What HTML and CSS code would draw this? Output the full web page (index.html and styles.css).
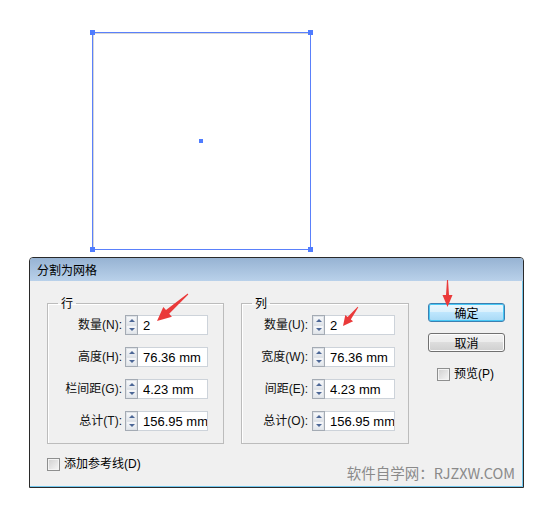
FILE: index.html
```html
<!DOCTYPE html>
<html lang="zh">
<head>
    <meta charset="UTF-8">
    <meta name="viewport" content="width=device-width, initial-scale=1.0">
    <title>分割为网格</title>
    <link rel="stylesheet" href="styles.css">
</head>
<body>
    <!-- The artboard with the selected rectangle -->
    <div class="canvas">
        <div class="shape">
            <span class="handle tl"></span>
            <span class="handle tr"></span>
            <span class="handle bl"></span>
            <span class="handle br"></span>
            <span class="center-dot"></span>
        </div>
    </div>

    <!-- The split into grid dialog -->
    <div class="dialog">
        <div class="titlebar">分割为网格</div>
        <div class="dialog-body">
            <div class="dialog-main">
                <fieldset class="group group-rows">
                    <legend>行</legend>
                    <div class="row">
                        <label>数量(N):</label>
                        <div class="field"><span class="spin"><i class="up"></i><i class="down"></i></span><input type="text" value="2"></div>
                    </div>
                    <div class="row">
                        <label>高度(H):</label>
                        <div class="field"><span class="spin"><i class="up"></i><i class="down"></i></span><input type="text" value="76.36 mm"></div>
                    </div>
                    <div class="row">
                        <label>栏间距(G):</label>
                        <div class="field"><span class="spin"><i class="up"></i><i class="down"></i></span><input type="text" value="4.23 mm"></div>
                    </div>
                    <div class="row">
                        <label>总计(T):</label>
                        <div class="field"><span class="spin"><i class="up"></i><i class="down"></i></span><input type="text" value="156.95 mm"></div>
                    </div>
                </fieldset>

                <fieldset class="group group-cols">
                    <legend>列</legend>
                    <div class="row">
                        <label>数量(U):</label>
                        <div class="field"><span class="spin"><i class="up"></i><i class="down"></i></span><input type="text" value="2"></div>
                    </div>
                    <div class="row">
                        <label>宽度(W):</label>
                        <div class="field"><span class="spin"><i class="up"></i><i class="down"></i></span><input type="text" value="76.36 mm"></div>
                    </div>
                    <div class="row">
                        <label>间距(E):</label>
                        <div class="field"><span class="spin"><i class="up"></i><i class="down"></i></span><input type="text" value="4.23 mm"></div>
                    </div>
                    <div class="row">
                        <label>总计(O):</label>
                        <div class="field"><span class="spin"><i class="up"></i><i class="down"></i></span><input type="text" value="156.95 mm"></div>
                    </div>
                </fieldset>

                <div class="actions">
                    <button type="button" class="btn btn-default">确定</button>
                    <button type="button" class="btn">取消</button>
                    <label class="check-label preview"><span class="check"></span>预览(P)</label>
                </div>
            </div>

            <div class="dialog-foot">
                <label class="check-label"><span class="check"></span>添加参考线(D)</label>
                <span class="watermark">软件自学网：RJZXW.COM</span>
            </div>
        </div>
    </div>

    <!-- Red arrows drawn over the screenshot -->
    <svg class="arrows" width="549" height="510" viewBox="0 0 549 510">
        <polygon points="188.3,294.4 169.2,313.7 171.9,316.7 157,321 163.3,306.9 166,309.9 187.7,293.6" />
        <polygon points="358.3,307.2 350.8,319.4 353.1,321.3 343,326 345.3,315.1 347.6,317 357.7,306.8" />
        <polygon points="448,280 449,295 452.5,295 447.5,307 442.5,295 446,295 447,280" />
    </svg>
</body>
</html>
```

FILE: styles.css
```css
/* Basic page */
body {
    margin: 0;
    background-color: #fff;
    font-family: "Liberation Sans", "Noto Sans CJK SC", sans-serif;
    font-size: 12px;
    color: #000;
    position: relative;
    width: 549px;
    height: 510px;
    overflow: hidden;
}

/* The artboard */
.canvas {
    box-sizing: border-box;
    height: 257px;
    padding: 32px 0 0 92px;
}

.shape {
    position: relative;
    box-sizing: border-box;
    width: 219px;
    height: 218px;
    border: 1px solid #5a80fb;
    box-shadow: inset 1px 1px 0 #d6d6d6;
    display: flex;
    align-items: center;
    justify-content: center;
}

.handle {
    position: absolute;
    width: 5px;
    height: 5px;
    background-color: #4f7cff;
}

.handle.tl { left: -3px; top: -3px; }
.handle.tr { right: -3px; top: -3px; }
.handle.bl { left: -3px; bottom: -3px; }
.handle.br { right: -3px; bottom: -3px; }

.center-dot {
    width: 4px;
    height: 4px;
    background-color: #4f7cff;
    margin: 0 1px 1px 0;
}

/* The dialog window */
.dialog {
    box-sizing: border-box;
    margin-left: 29px;
    width: 495px;
    height: 231px;
    border: 1px solid #2a2a2a;
    border-radius: 4px 4px 0 0;
    background-color: #f0f0f0;
    box-shadow: inset -1px -1px 0 #74c8ee;
    overflow: hidden;
}

.titlebar {
    height: 23px;
    line-height: 23px;
    padding-left: 7px;
    font-family: "Noto Sans CJK SC", sans-serif;
    font-size: 12px;
    background: linear-gradient(#97b3d3, #b9d1ea);
}

.dialog-body {
    padding: 15px 8px 0 17px;
}

.dialog-main {
    display: flex;
    align-items: flex-start;
}

/* Group boxes */
.group {
    margin: 0;
    border: 1px solid #bcbcbc;
    box-shadow: inset 1px 1px 0 #fff;
    display: grid;
    row-gap: 12px;
    align-items: center;
}

.group legend {
    margin-left: 10px;
    padding: 0 3px;
    line-height: 14px;
    font-family: "Noto Sans CJK SC", sans-serif;
}

.group-rows {
    box-sizing: border-box;
    width: 177px;
    padding: 5px 15px 12px 0;
}

.group-cols {
    box-sizing: border-box;
    width: 168px;
    padding: 5px 13px 12px 0;
    margin-left: 17px;
}

.row {
    display: grid;
    align-items: center;
    height: 20px;
}

.group-rows .row {
    grid-template-columns: 1fr 83px;
    column-gap: 3px;
}

.group-cols .row {
    grid-template-columns: 1fr 83px;
    column-gap: 4px;
}

.row label {
    text-align: right;
    white-space: nowrap;
    line-height: 20px;
    color: #111;
}

/* Spinner input fields */
.field {
    display: flex;
    height: 20px;
}

.spin {
    box-sizing: border-box;
    width: 13px;
    height: 20px;
    border: 1px solid #a4abb4;
    background-color: #eef0f3;
    display: flex;
    flex-direction: column;
}

.spin i {
    flex: 1;
    display: flex;
    align-items: center;
    justify-content: center;
    border: 1px solid #dfe3e8;
    background: linear-gradient(#f7f8fa, #e3e7ec);
}

.spin i::after {
    content: "";
    width: 0;
    height: 0;
    border-left: 3px solid transparent;
    border-right: 3px solid transparent;
}

.spin .up::after {
    border-bottom: 3px solid #4c6796;
}

.spin .down::after {
    border-top: 3px solid #4c6796;
}

.field input {
    box-sizing: border-box;
    flex: 1;
    min-width: 0;
    height: 20px;
    margin: 0;
    padding: 0 0 0 5px;
    border: 1px solid #cdd3da;
    border-left: none;
    background-color: #fff;
    font-family: "Liberation Sans", sans-serif;
    font-size: 13px;
    color: #000;
    outline: none;
}

/* Buttons on the right */
.actions {
    display: flex;
    flex-direction: column;
    align-items: flex-start;
    margin-left: 19px;
    padding-top: 7px;
}

.btn {
    box-sizing: border-box;
    width: 77px;
    height: 19px;
    padding: 0;
    border: 1px solid #707070;
    border-radius: 3px;
    background: linear-gradient(#f2f2f2 0%, #ebebeb 49%, #dddddd 50%, #cfcfcf 100%);
    box-shadow: inset 0 0 0 1px #fcfcfc;
    font-family: "Noto Sans CJK SC", sans-serif;
    font-size: 12px;
    line-height: 16px;
    color: #000;
}

.btn + .btn {
    margin-top: 11px;
}

.btn-default {
    border-color: #3c7fb1;
    background: linear-gradient(#eaf6fd 0%, #d9f0fc 49%, #bee6fd 50%, #a7d9f5 100%);
    box-shadow: inset 0 0 0 1px #48c8f5;
}

/* Check boxes */
.check-label {
    display: flex;
    align-items: center;
    gap: 4px;
    line-height: 14px;
    white-space: nowrap;
}

.check {
    box-sizing: border-box;
    width: 13px;
    height: 13px;
    border: 1px solid #8e8f8f;
    background: linear-gradient(135deg, #cfcfcf, #f7f7f7);
    box-shadow: inset 0 0 0 1px #f4f4f4;
}

.preview {
    margin: 15px 0 0 9px;
}

/* Bottom line of the dialog */
.dialog-foot {
    display: flex;
    align-items: flex-start;
    margin-top: 13px;
}

.watermark {
    margin-left: auto;
    padding-top: 8px;
    font-family: "Noto Sans CJK SC", "Open Sans", sans-serif;
    font-size: 14.5px;
    line-height: 16px;
    color: #8a8a8a;
}

/* Arrows over everything */
.arrows {
    position: absolute;
    left: 0;
    top: 0;
    pointer-events: none;
}

.arrows polygon {
    fill: #ea3a3a;
}
```
